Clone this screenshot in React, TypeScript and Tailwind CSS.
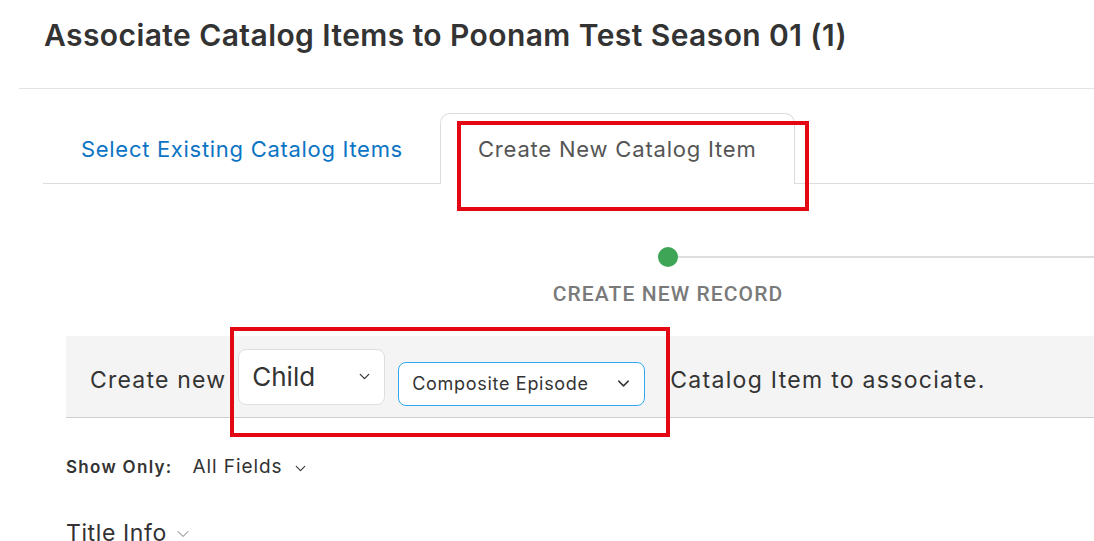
import { ChevronDown } from "lucide-react";

export default function App() {
  return (
    <div className="relative h-[541px] w-[1094px] overflow-hidden bg-white font-['Inter',sans-serif] text-[#333]">
      <div className="pl-[44px] pt-[16px] text-[30px] font-semibold leading-[38px] tracking-[0.42px]">
        Associate Catalog Items to Poonam Test Season 01 (1)
      </div>
      <div className="ml-[19px] mt-[34px] border-t border-[#e2e2e2]" />

      <div className="ml-[43px] mt-[24px] flex items-end border-b border-[#dcdcdc]">
        <div className="flex h-[70px] w-[397px] items-center pl-[38px] pt-[2px] text-[22px] tracking-[0.7px] text-[#0b74c4]">
          Select Existing Catalog Items
        </div>
        <div className="-mb-px flex h-[71px] w-[355px] items-center rounded-t-[10px] border border-b-0 border-[#dcdcdc] bg-white pl-[37px] pt-px text-[22px] tracking-[0.8px] text-[#555]">
          Create New Catalog Item
        </div>
      </div>

      <div className="mt-[63px] flex items-center">
        <div className="w-[658px]" />
        <div className="h-[20px] w-[20px] rounded-full bg-[#3ea556]" />
        <div className="h-[2px] flex-1 bg-[#dedede]" />
      </div>
      <div className="mt-[15px] flex">
        <div className="w-[528px]" />
        <div className="w-[280px] text-center font-['Roboto',sans-serif] text-[21px] font-medium leading-[24px] tracking-[1.1px] text-[#7a7a7a]">
          CREATE NEW RECORD
        </div>
      </div>

      <div className="ml-[66px] mt-[30px] flex h-[82px] items-center border-b border-[#cfcfcf] bg-[#f4f4f4] pl-[24px]">
        <span className="mt-[7px] text-[23px] tracking-[1.2px]">Create new</span>
        <div className="ml-[12px] flex h-[56px] w-[147px] items-center justify-between rounded-[8px] border border-[#dedede] bg-white pl-[13px] pr-[11px]">
          <span className="text-[26px] text-[#333]">Child</span>
          <ChevronDown size={17} strokeWidth={1.8} className="text-[#333]" />
        </div>
        <div className="ml-[13px] mt-[14px] flex h-[44px] w-[247px] items-center justify-between rounded-[8px] border border-[#2ea8f0] bg-white pl-[13px] pr-[11px]">
          <span className="text-[18px] tracking-[0.7px] text-[#333]">Composite Episode</span>
          <ChevronDown size={19} strokeWidth={1.8} className="text-[#333]" />
        </div>
        <span className="ml-[25px] mt-[7px] text-[23px] tracking-[1.3px]">Catalog Item to associate.</span>
      </div>

      <div className="ml-[66px] mt-[35px] flex items-center">
        <span className="text-[17px] font-semibold tracking-[1.3px]">Show Only:</span>
        <span className="ml-[20px] text-[19px] tracking-[0.9px]">All Fields</span>
        <ChevronDown size={17} strokeWidth={1.5} className="ml-[10px] mt-[2px]" />
      </div>

      <div className="ml-[66px] mt-[34px] flex items-center">
        <span className="text-[23px] tracking-[0.6px]">Title Info</span>
        <ChevronDown size={20} strokeWidth={1.2} className="ml-[6px] mt-[3px] text-[#777]" />
      </div>

      <div className="pointer-events-none absolute left-[457px] top-[121px] h-[90px] w-[352px] border-[4px] border-[#e30613]" />
      <div className="pointer-events-none absolute left-[230px] top-[327px] h-[110px] w-[440px] border-[4px] border-[#e30613]" />
    </div>
  );
}
